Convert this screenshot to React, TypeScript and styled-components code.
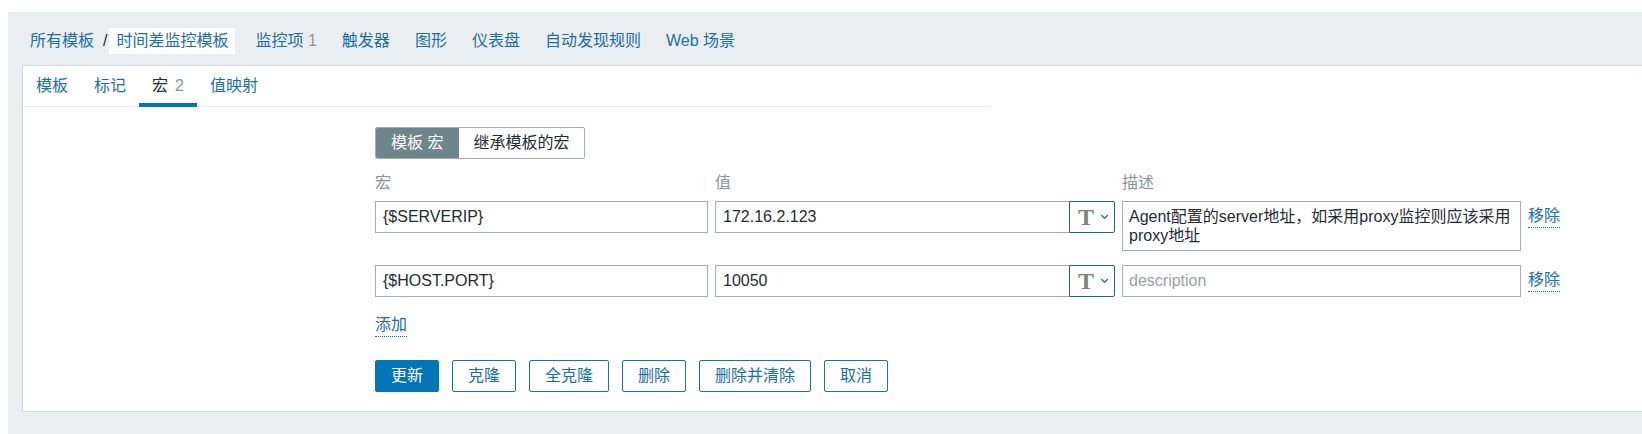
import React from 'react';
import styled, { createGlobalStyle, css } from 'styled-components';

const color = {
  link: '#1a6fa8',
  primary: '#0275b8',
  text: '#1f2c33',
  muted: '#8a9399',
  canvas: '#ebeef0',
  panelBorder: '#d3d9dd',
  fieldBorder: '#a3adb3',
};

const GlobalStyle = createGlobalStyle`
  *, *::before, *::after { box-sizing: border-box; }
  html { background: #ffffff; }
  body {
    margin: 0;
    color: ${color.text};
    font: 16px/24px "Liberation Sans", "Noto Sans CJK SC", sans-serif;
  }
  button, input, textarea { font: inherit; color: inherit; margin: 0; }
`;

const Page = styled.main`
  margin: 12px 0 0 8px;
  min-height: calc(100vh - 12px);
  background: ${color.canvas};
  padding: 16px 0 21px 14px;
`;

const ObjectNav = styled.nav`
  display: flex;
  flex-wrap: wrap;
  align-items: center;
  gap: 11px;
  padding: 0 1px 11px;
`;

const Breadcrumb = styled.div`
  display: flex;
  align-items: center;
  padding-right: 2px;
`;

const Separator = styled.span`
  padding: 0 2px;
`;

const NavLink = styled.a<{ $current?: boolean }>`
  padding: 1px 7px;
  color: ${color.link};
  text-decoration: none;
  white-space: nowrap;
  background: ${({ $current }) => ($current ? '#ffffff' : 'transparent')};
`;

const Count = styled.span`
  color: ${color.muted};
`;

const Panel = styled.section`
  background: #ffffff;
  border: 1px solid ${color.panelBorder};
  border-right: 0;
`;

const TabList = styled.div`
  display: flex;
  max-width: 966px;
  border-bottom: 1px solid #e8ebed;
`;

const Tab = styled.button<{ $selected?: boolean }>`
  display: flex;
  gap: 7px;
  padding: 8px 13px 5px;
  border: 0;
  border-bottom: 4px solid ${({ $selected }) => ($selected ? color.primary : 'transparent')};
  margin-bottom: -1px;
  background: none;
  color: ${({ $selected }) => ($selected ? color.text : color.link)};
  white-space: nowrap;
`;

const Form = styled.form`
  padding: 20px 0 19px 352px;
`;

const Segmented = styled.fieldset`
  display: inline-flex;
  margin: 0;
  padding: 0;
  border: 1px solid ${color.fieldBorder};
  border-radius: 2px;
  overflow: hidden;
  vertical-align: top;
`;

const Segment = styled.label`
  padding: 3px 15px;
  cursor: pointer;
  white-space: nowrap;

  &:has(input:checked) {
    background: #6f858c;
    box-shadow: 0 0 0 1px #6f858c;
    color: #ffffff;
  }
`;

const SegmentRadio = styled.input`
  position: absolute;
  opacity: 0;
  pointer-events: none;
`;

const MacroTable = styled.table`
  width: 100%;
  max-width: 1185px;
  margin-top: 12px;
  table-layout: fixed;
  border-collapse: collapse;
`;

const Column = styled.col<{ $width?: number }>`
  width: ${({ $width }) => ($width ? `${$width}px` : 'auto')};
`;

const HeadCell = styled.th`
  padding: 0 0 6px;
  color: ${color.muted};
  font-weight: 400;
  text-align: left;
`;

const Cell = styled.td`
  padding: 0 7px 14px 0;
  vertical-align: top;
`;

const ActionCell = styled(Cell)`
  padding: 4px 0 0;
`;

const field = css`
  display: block;
  width: 100%;
  border: 1px solid ${color.fieldBorder};
  border-radius: 0;
  background: #ffffff;
`;

const TextInput = styled.input`
  ${field}
  height: 32px;
  padding: 0 7px;
`;

const Description = styled.textarea`
  ${field}
  min-height: 32px;
  padding: 5px 6px;
  line-height: 19px;
  resize: none;
  overflow: hidden;

  &::placeholder { color: #999fa3; opacity: 1; }
`;

const ValueGroup = styled.div`
  display: flex;

  ${TextInput} { flex: 1; min-width: 0; border-right: 0; }
`;

const TypeButton = styled.button`
  display: flex;
  align-items: center;
  justify-content: space-between;
  width: 46px;
  height: 32px;
  padding: 0 5px 0 8px;
  border: 1px solid #23658f;
  border-radius: 0 2px 2px 0;
  background: #ffffff;
`;

const TypeGlyph = styled.span`
  color: #7b8588;
  font: 700 24px/30px "Liberation Serif", serif;
`;

const LinkButton = styled.button`
  display: block;
  padding: 0;
  border: 0;
  border-bottom: 1px dotted ${color.link};
  background: none;
  color: ${color.link};
  line-height: 22px;
`;

const AddRow = styled.div`
  padding: 3px 0 0;
`;

const Actions = styled.div`
  display: flex;
  flex-wrap: wrap;
  gap: 13px;
  margin-top: 23px;
`;

const Button = styled.button<{ $primary?: boolean }>`
  height: 32px;
  padding: 0 15px;
  border: 1px solid ${({ $primary }) => ($primary ? color.primary : '#23709f')};
  border-radius: 2px;
  background: ${({ $primary }) => ($primary ? color.primary : '#ffffff')};
  color: ${({ $primary }) => ($primary ? '#ffffff' : color.link)};
`;

const Chevron = () => (
  <svg width="9" height="6" viewBox="0 0 9 6" fill="none" stroke="#3f6f8c" strokeWidth="1.4" aria-hidden="true">
    <path d="M1.2 1 4.5 4.3 7.8 1" />
  </svg>
);

const navItems: { label: string; count?: number }[] = [
  { label: '监控项', count: 1 },
  { label: '触发器' },
  { label: '图形' },
  { label: '仪表盘' },
  { label: '自动发现规则' },
  { label: 'Web 场景' },
];

const tabs: { label: string; count?: number; selected?: boolean }[] = [
  { label: '模板' },
  { label: '标记' },
  { label: '宏', count: 2, selected: true },
  { label: '值映射' },
];

const macros = [
  {
    name: '{$SERVERIP}',
    value: '172.16.2.123',
    description: 'Agent配置的server地址，如采用proxy监控则应该采用proxy地址',
    rows: 2,
  },
  { name: '{$HOST.PORT}', value: '10050', description: '', rows: 1 },
];

const actions = ['更新', '克隆', '全克隆', '删除', '删除并清除', '取消'];

export default function App() {
  return (
    <>
      <GlobalStyle />
      <Page>
        <ObjectNav>
          <Breadcrumb>
            <NavLink href="#templates">所有模板</NavLink>
            <Separator>/</Separator>
            <NavLink href="#template" $current aria-current="page">时间差监控模板</NavLink>
          </Breadcrumb>
          {navItems.map(({ label, count }) => (
            <NavLink key={label} href="#">
              {label}
              {count !== undefined && <Count> {count}</Count>}
            </NavLink>
          ))}
        </ObjectNav>
        <Panel>
          <TabList role="tablist">
            {tabs.map(({ label, count, selected }) => (
              <Tab key={label} type="button" role="tab" aria-selected={!!selected} $selected={selected}>
                {label}
                {count !== undefined && <Count>{count}</Count>}
              </Tab>
            ))}
          </TabList>
          <Form onSubmit={(event) => event.preventDefault()}>
            <Segmented>
              <Segment>
                <SegmentRadio type="radio" name="scope" defaultChecked />
                模板 宏
              </Segment>
              <Segment>
                <SegmentRadio type="radio" name="scope" />
                继承模板的宏
              </Segment>
            </Segmented>
            <MacroTable>
              <colgroup>
                <Column $width={340} />
                <Column />
                <Column $width={406} />
                <Column $width={32} />
              </colgroup>
              <thead>
                <tr>
                  <HeadCell scope="col">宏</HeadCell>
                  <HeadCell scope="col">值</HeadCell>
                  <HeadCell scope="col">描述</HeadCell>
                  <HeadCell as="td" />
                </tr>
              </thead>
              <tbody>
                {macros.map(({ name, value, description, rows }) => (
                  <tr key={name}>
                    <Cell>
                      <TextInput type="text" defaultValue={name} aria-label="宏" />
                    </Cell>
                    <Cell>
                      <ValueGroup>
                        <TextInput type="text" defaultValue={value} aria-label="值" />
                        <TypeButton type="button" aria-haspopup="menu">
                          <TypeGlyph>T</TypeGlyph>
                          <Chevron />
                        </TypeButton>
                      </ValueGroup>
                    </Cell>
                    <Cell>
                      <Description
                        rows={rows}
                        defaultValue={description}
                        placeholder="description"
                        aria-label="描述"
                      />
                    </Cell>
                    <ActionCell>
                      <LinkButton type="button">移除</LinkButton>
                    </ActionCell>
                  </tr>
                ))}
              </tbody>
            </MacroTable>
            <AddRow>
              <LinkButton type="button">添加</LinkButton>
            </AddRow>
            <Actions>
              {actions.map((label, index) => (
                <Button key={label} type={index === 0 ? 'submit' : 'button'} $primary={index === 0}>
                  {label}
                </Button>
              ))}
            </Actions>
          </Form>
        </Panel>
      </Page>
    </>
  );
}
